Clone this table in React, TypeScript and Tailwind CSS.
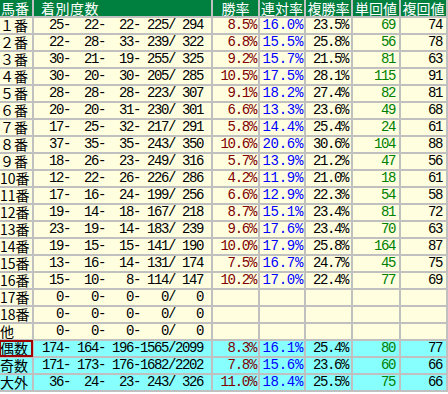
import React from 'react';

type Row = {
  label: string;
  counts: string;
  win?: string;
  place2?: string;
  place3?: string;
  tan?: string;
  fuku?: string;
  summary?: boolean;
  boxed?: boolean;
};

const fmt = (a: number, b: number, c: number, d: number, n: number) =>
  `${String(a).padStart(3, ' ')}- ${String(b).padStart(3, ' ')}- ${String(c).padStart(3, ' ')}-${String(d).padStart(4, ' ')}/${String(n).padStart(4, ' ')}`;

const rows: Row[] = [
  { label: '１番', counts: fmt(25, 22, 22, 225, 294), win: '8.5%', place2: '16.0%', place3: '23.5%', tan: '69', fuku: '74' },
  { label: '２番', counts: fmt(22, 28, 33, 239, 322), win: '6.8%', place2: '15.5%', place3: '25.8%', tan: '56', fuku: '78' },
  { label: '３番', counts: fmt(30, 21, 19, 255, 325), win: '9.2%', place2: '15.7%', place3: '21.5%', tan: '81', fuku: '63' },
  { label: '４番', counts: fmt(30, 20, 30, 205, 285), win: '10.5%', place2: '17.5%', place3: '28.1%', tan: '115', fuku: '91' },
  { label: '５番', counts: fmt(28, 28, 28, 223, 307), win: '9.1%', place2: '18.2%', place3: '27.4%', tan: '82', fuku: '81' },
  { label: '６番', counts: fmt(20, 20, 31, 230, 301), win: '6.6%', place2: '13.3%', place3: '23.6%', tan: '49', fuku: '68' },
  { label: '７番', counts: fmt(17, 25, 32, 217, 291), win: '5.8%', place2: '14.4%', place3: '25.4%', tan: '24', fuku: '61' },
  { label: '８番', counts: fmt(37, 35, 35, 243, 350), win: '10.6%', place2: '20.6%', place3: '30.6%', tan: '104', fuku: '88' },
  { label: '９番', counts: fmt(18, 26, 23, 249, 316), win: '5.7%', place2: '13.9%', place3: '21.2%', tan: '47', fuku: '56' },
  { label: '10番', counts: fmt(12, 22, 26, 226, 286), win: '4.2%', place2: '11.9%', place3: '21.0%', tan: '18', fuku: '61' },
  { label: '11番', counts: fmt(17, 16, 24, 199, 256), win: '6.6%', place2: '12.9%', place3: '22.3%', tan: '54', fuku: '58' },
  { label: '12番', counts: fmt(19, 14, 18, 167, 218), win: '8.7%', place2: '15.1%', place3: '23.4%', tan: '81', fuku: '72' },
  { label: '13番', counts: fmt(23, 19, 14, 183, 239), win: '9.6%', place2: '17.6%', place3: '23.4%', tan: '70', fuku: '63' },
  { label: '14番', counts: fmt(19, 15, 15, 141, 190), win: '10.0%', place2: '17.9%', place3: '25.8%', tan: '164', fuku: '87' },
  { label: '15番', counts: fmt(13, 16, 14, 131, 174), win: '7.5%', place2: '16.7%', place3: '24.7%', tan: '45', fuku: '75' },
  { label: '16番', counts: fmt(15, 10, 8, 114, 147), win: '10.2%', place2: '17.0%', place3: '22.4%', tan: '77', fuku: '69' },
  { label: '17番', counts: fmt(0, 0, 0, 0, 0) },
  { label: '18番', counts: fmt(0, 0, 0, 0, 0) },
  { label: '他', counts: fmt(0, 0, 0, 0, 0) },
  { label: '偶数', counts: fmt(174, 164, 196, 1565, 2099), win: '8.3%', place2: '16.1%', place3: '25.4%', tan: '80', fuku: '77', summary: true, boxed: true },
  { label: '奇数', counts: fmt(171, 173, 176, 1682, 2202), win: '7.8%', place2: '15.6%', place3: '23.6%', tan: '60', fuku: '66', summary: true },
  { label: '大外', counts: fmt(36, 24, 23, 243, 326), win: '11.0%', place2: '18.4%', place3: '25.5%', tan: '75', fuku: '66', summary: true },
];

const headers = ['勝率', '連対率', '複勝率', '単回値', '複回値'];

const mono = "font-['Liberation_Mono','Noto_Sans_CJK_JP',monospace] text-[14px] leading-[15px] whitespace-pre";
const jp = "font-['Noto_Sans_CJK_JP',sans-serif]";
const head = `${jp} bg-[#00803f] text-white text-[14px] leading-[16px] flex items-center whitespace-nowrap`;

export default function App() {
  return (
    <div className="w-[448px] h-[394px] bg-white">
      <div className="grid grid-cols-[32px_177px_45px_44px_45px_46px_45px] auto-rows-[15px] grid-rows-[16px] gap-[2px] bg-[#c0c0c0] pr-[2px] pb-[2px] w-[448px]">
        <div className={`${head} pl-px`}>馬番</div>
        <div className={`${head} pl-[7px] tracking-[0.5px]`}>着別度数</div>
        {headers.map((h) => (
          <div key={h} className={`${head} justify-center`}>
            {h}
          </div>
        ))}

        {rows.map((r) => {
          const bg = r.summary ? 'bg-[#88ffff]' : 'bg-[#ffffe0]';
          return (
            <React.Fragment key={r.label}>
              <div
                className={`${jp} ${bg} text-[14px] leading-[15px] flex items-center whitespace-nowrap ${
                  r.boxed ? 'outline-2 outline-[#a00000] -outline-offset-1 z-10' : ''
                }`}
              >
                {r.label}
              </div>
              <div className={`${mono} ${bg} tracking-[-1.4px] flex items-center justify-center text-black`}>{r.counts}</div>
              <div className={`${mono} ${bg} tracking-[-1.3px] flex items-center justify-end pr-[2px] text-[#800000]`}>{r.win}</div>
              <div className={`${mono} ${bg} tracking-[-0.3px] flex items-center justify-end pr-[1px] text-[#0000ff]`}>{r.place2}</div>
              <div className={`${mono} ${bg} tracking-[-1.4px] flex items-center justify-end pr-[3px] text-black`}>{r.place3}</div>
              <div className={`${mono} ${bg} tracking-[-1.4px] flex items-center justify-end pr-[4px] text-[#008000]`}>{r.tan}</div>
              <div className={`${mono} ${bg} tracking-[-1.4px] flex items-center justify-end pr-[4px] text-black`}>{r.fuku}</div>
            </React.Fragment>
          );
        })}
      </div>
    </div>
  );
}
